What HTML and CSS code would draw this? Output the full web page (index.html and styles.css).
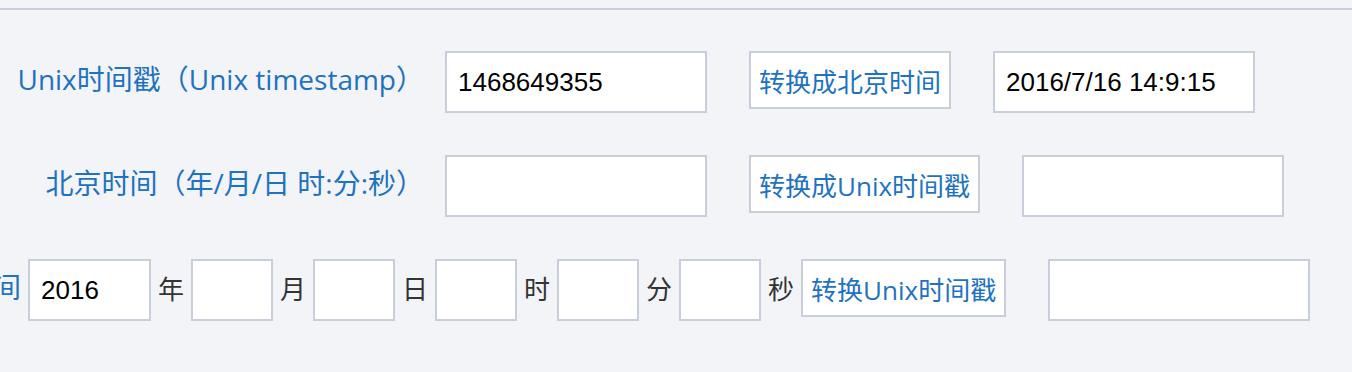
FILE: index.html
```html
<!DOCTYPE html>
<html>
    <head>
        <meta charset="utf-8">
        <title>Unix时间戳转换</title>
        <meta name="viewport" content="width=device-width, initial-scale=1.0">
        <link rel="stylesheet" href="styles.css">
    </head>
    <body>
        <div class="converter">
            <div class="row">
                <label class="row__label">Unix时间戳（Unix timestamp）</label>
                <input class="field" type="text" value="1468649355">
                <button class="btn">转换成北京时间</button>
                <input class="field" type="text" value="2016/7/16 14:9:15">
            </div>
            <div class="row">
                <label class="row__label">北京时间（年/月/日 时:分:秒）</label>
                <input class="field" type="text" value="">
                <button class="btn">转换成Unix时间戳</button>
                <input class="field" type="text" value="">
            </div>
            <div class="row">
                <label class="row__label row__label--narrow">北京时间</label>
                <input class="field field--year" type="text" value="2016">
                <span class="unit">年</span>
                <input class="field field--small" type="text" value="">
                <span class="unit">月</span>
                <input class="field field--small" type="text" value="">
                <span class="unit">日</span>
                <input class="field field--small" type="text" value="">
                <span class="unit">时</span>
                <input class="field field--small" type="text" value="">
                <span class="unit">分</span>
                <input class="field field--small" type="text" value="">
                <span class="unit">秒</span>
                <button class="btn btn--tight">转换Unix时间戳</button>
                <input class="field" type="text" value="">
            </div>
        </div>
    </body>
</html>
```

FILE: styles.css
```css
:root {
    --font-main: 'Open Sans', 'Noto Sans CJK SC', sans-serif;
    --font-input: 'Liberation Sans', Arial, sans-serif;

    --color-bg: #f3f4f8;
    --color-line: #c9cedd;
    --color-link: #1e72bf;
    --color-text: #333;
    --color-white: #fff;

    --size-field: 62px;
    --size-gap: 42px;
}
html, body {
    background-color: var(--color-bg);
}
body {
    margin: 8px 0 0;
    overflow: hidden;
}
.converter {
    border-top: 2px solid var(--color-line);
    padding-top: 41px;
    display: flex;
    flex-direction: column;
    gap: 42px;
}
.row {
    display: flex;
    align-items: flex-start;
}
.row > * {
    flex-shrink: 0;
}
.row__label {
    width: 424px;
    min-width: 0;
    display: flex;
    justify-content: flex-end;
    margin-right: 21px;
    white-space: nowrap;
    font-family: var(--font-main);
    font-size: 28px;
    line-height: 56px;
    color: var(--color-link);
}
.row__label--narrow {
    width: 21px;
    margin-right: 7px;
}
.field {
    box-sizing: border-box;
    width: 262px;
    height: var(--size-field);
    margin: 0;
    padding: 0 11px;
    border: 2px solid var(--color-line);
    border-radius: 0;
    background-color: var(--color-white);
    font-family: var(--font-input);
    font-size: 26px;
    color: #000;
    outline: none;
}
.field--year {
    width: 123px;
}
.field--small {
    width: 82px;
}
.btn {
    box-sizing: border-box;
    height: 58px;
    margin: 0 var(--size-gap);
    padding: 4px 8px 0;
    border: 2px solid var(--color-line);
    border-radius: 0;
    background-color: var(--color-white);
    font-family: var(--font-main);
    font-size: 26px;
    line-height: 50px;
    white-space: nowrap;
    color: var(--color-link);
    cursor: pointer;
}
.btn--tight {
    margin-left: 0;
}
.unit {
    margin: 0 7px;
    font-family: 'Noto Sans CJK SC', sans-serif;
    font-size: 26px;
    line-height: 58px;
    color: var(--color-text);
}
```
